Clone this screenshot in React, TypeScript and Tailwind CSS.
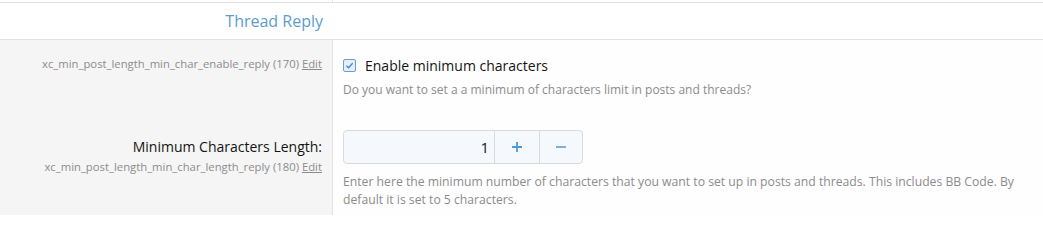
import React from "react";

const font = { fontFamily: '"Segoe UI", "Open Sans", "Noto Sans", sans-serif' };

export default function App() {
  return (
    <div className="w-[1043px] h-[215px] bg-[#fefefe] overflow-hidden text-[#141414]" style={font}>
      {/* top strip */}
      <div className="flex h-[3px] border-b border-[#e2e2e2]">
        <div className="w-[333px] border-r border-[#e2e2e2] bg-white" />
        <div className="flex-1 bg-white" />
      </div>
      {/* header */}
      <div className="flex h-[37px] items-center border-b border-[#e2e2e2] bg-white">
        <div className="w-[333px] pr-[10px] text-right text-[16px] text-[#5c9dcf]">Thread Reply</div>
      </div>
      {/* row 1 */}
      <div className="flex">
        <div className="w-[333px] shrink-0 bg-[#f5f5f5] border-r border-[#e2e2e2] pr-[10px] pt-[16px] text-right">
          <div className="text-[11.3px] leading-[16px] text-[#8c8c8c]">
            xc_min_post_length_min_char_enable_reply (170) <span className="underline text-[#8c8c8c]">Edit</span>
          </div>
        </div>
        <div className="flex-1 pl-[10px] pt-[15px] pb-[15px]">
          <label className="flex items-center h-[20px] gap-[9px]">
            <span className="w-[13px] h-[13px] rounded-[2px] border border-[#6a9fd2] bg-[#e4effa] flex items-center justify-center">
              <svg width="9" height="9" viewBox="0 0 10 10">
                <path d="M1.5 5.2 L4 7.5 L8.5 2.5" fill="none" stroke="#3f86c9" strokeWidth="1.4" />
              </svg>
            </span>
            <span className="text-[14px]">Enable minimum characters</span>
          </label>
          <div className="mt-[6px] text-[12px] leading-[18px] text-[#8c8c8c]">
            Do you want to set a a minimum of characters limit in posts and threads?
          </div>
        </div>
      </div>
      {/* row 2 */}
      <div className="flex">
        <div className="w-[333px] shrink-0 bg-[#f5f5f5] border-r border-[#e2e2e2] pr-[10px] pt-[23px] text-right">
          <div className="text-[14px] leading-[20px]">Minimum Characters Length:</div>
          <div className="mt-[2px] text-[11.3px] leading-[16px] text-[#8c8c8c]">
            xc_min_post_length_min_char_length_reply (180) <span className="underline">Edit</span>
          </div>
        </div>
        <div className="flex-1 pl-[10px] pt-[16px] pb-[6px] pr-[20px]">
          <div className="flex w-[240px] h-[34px] rounded-[4px] border border-[#dadada] bg-[#f5f9fd] overflow-hidden">
            <div className="w-[150px] flex items-center justify-end pr-[5px] text-[15px]">1</div>
            <div className="w-[45px] border-l border-[#dadada] flex items-center justify-center">
              <svg width="12" height="12" viewBox="0 0 12 12">
                <path d="M6 1 V11 M1 6 H11" stroke="#4a9ad8" strokeWidth="1.8" />
              </svg>
            </div>
            <div className="flex-1 border-l border-[#dadada] flex items-center justify-center">
              <svg width="12" height="12" viewBox="0 0 12 12">
                <path d="M1 6 H11" stroke="#7fb0da" strokeWidth="1.8" />
              </svg>
            </div>
          </div>
          <div className="mt-[9px] text-[12.2px] leading-[18px] text-[#8c8c8c]">
            Enter here the minimum number of characters that you want to set up in posts and threads. This includes BB Code. By default it is set to 5 characters.
          </div>
        </div>
      </div>
    </div>
  );
}
